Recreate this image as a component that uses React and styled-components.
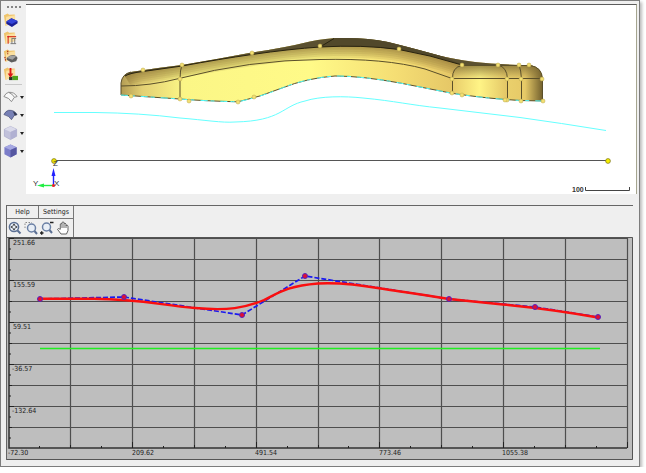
import styled, { createGlobalStyle } from 'styled-components';

const GlobalStyle = createGlobalStyle`
  body {
    margin: 0;
    background: #fff;
    font-family: "DejaVu Sans Condensed", "Open Sans", sans-serif;
    font-size: 7px;
    color: #222;
  }
`;

const Window = styled.main`
  margin-right: 6px;
  padding-top: 3px;
  padding-bottom: 6px;
  border: 1px solid #7d7d7d;
  background: #efefef;
  box-shadow: 2px 2px 3px #bbb;
`;

const TopRow = styled.div`
  display: flex;
  padding-right: 2px;
`;

const SideBar = styled.div`
  width: 25px;
  flex: none;
  display: flex;
  flex-direction: column;
`;

const Grip = styled.div`
  display: flex;
  justify-content: center;
  gap: 2px;
  padding: 2px 0 3px;
`;

const GripDot = styled.span`
  width: 2px;
  height: 2px;
  background: #858585;
`;

const SideButton = styled.button`
  display: flex;
  align-items: center;
  gap: 2px;
  height: 18px;
  padding: 0 0 0 2px;
  border: 0;
  background: none;
`;

const Separator = styled.hr`
  width: 17px;
  height: 1px;
  margin: 1px 4px 3px;
  border: 0;
  background: #c8c8c8;
`;

const Viewport = styled.section`
  flex: 1;
  min-width: 0;
  background: #fff;
  border-top: 1px solid #5c5c5c;
  border-right: 1px solid #a5a590;
`;

const Drawing = styled.svg`
  display: block;
  width: 100%;
  height: auto;
`;

const Editor = styled.section`
  margin: 11px 6px 0 5px;
  border-top: 1px solid #666;
  border-left: 1px solid #666;
`;

const Controls = styled.div`
  width: fit-content;
  border-right: 1px solid #777;
`;

const MenuRow = styled.nav`
  display: flex;
  border-bottom: 1px solid #777;
`;

const MenuButton = styled.button`
  width: ${(props) => props.$width}px;
  height: 12px;
  padding: 0;
  border: 0;
  border-right: ${(props) => (props.$last ? '0' : '1px solid #777')};
  background: none;
  font: inherit;
  line-height: 12px;
  color: #222;
`;

const ToolRow = styled.div`
  display: flex;
  height: 18px;
`;

const ToolButton = styled.button`
  display: flex;
  align-items: center;
  justify-content: center;
  width: 16px;
  padding: 0;
  border: 0;
  background: none;
`;

const Folder = () => (
  <>
    <path d="M1 3 L5 1 L6.5 2.5 L12.5 2 L13 11 L2.5 14 Z" fill="#efc46c" />
    <path d="M3.5 4.5 L13 3 L13 11 L2.5 14 Z" fill="#fbe0a0" />
  </>
);

const icons = {
  openSolid: (
    <>
      <Folder />
      <path d="M3.5 9.5 L9 6 L15.5 9 L15.5 11.5 L9.5 15.5 L3.5 12 Z" fill="#1a1f96" />
      <path d="M3.5 9.5 L9 6 L15.5 9 L9.5 12.2 Z" fill="#3344d8" />
    </>
  ),
  openSketch: (
    <>
      <Folder />
      <path d="M5.5 14 V6.5 H14" fill="none" stroke="#d8412c" strokeWidth="1.3" />
      <path d="M8 14 H14 M9 8.5 H14 M9.5 9 V14 M12.5 9 V14" stroke="#777" fill="none" />
      <circle cx="5.5" cy="6.5" r="1" fill="#d22" />
    </>
  ),
  openPart: (
    <>
      <Folder />
      <path d="M5 2.5 V6 M2 9 L3 14" stroke="#b23c20" strokeWidth="1.4" strokeDasharray="1.5 1" />
      <path d="M4 10 Q9 5 14 8 L15.5 10 L14 13.5 L9 15 L4 12 Z" fill="#5e5e5e" />
      <path d="M4.5 10 Q9 6 14 8.5 L10 12 Z" fill="#a2a2a2" />
    </>
  ),
  importPart: (
    <>
      <Folder />
      <rect x="10" y="10" width="6" height="4.5" fill="#4fa31c" />
      <rect x="6.5" y="11" width="3.5" height="3.5" fill="#263226" />
      <path d="M7 1.5 H9 V7.5 H11 L8 12 L5 7.5 H7 Z" fill="#dc1616" />
    </>
  ),
  surfaceWire: (
    <path d="M1 7.5 Q3 3.5 6 3 Q12 2.5 15 7.5 L12 8.5 L9 13 Q7 9 1 7.5 Z M12 8 Q10 4.5 6 3" fill="#f8f8f8" stroke="#888" />
  ),
  surfaceShaded: (
    <>
      <path d="M1 7.5 Q3 3.5 6 3 Q12 2.5 15 7.5 L12 8.5 L9 13 Q7 9 1 7.5 Z" fill="#7780b5" stroke="#4a5078" strokeWidth=".8" />
      <path d="M10.5 4 Q14 5 15 8 L12.5 8.5 Z" fill="#333850" />
    </>
  ),
  cubeLight: (
    <>
      <path d="M8 1 L14.5 4 V11.5 L8 15 L1.5 11.5 V4 Z" fill="#c1c1da" stroke="#a5a5c6" strokeWidth=".7" />
      <path d="M8 1 L14.5 4 L8 7 L1.5 4 Z" fill="#dadaea" />
      <path d="M8 7 L14.5 4 V11.5 L8 15 Z" fill="#b1b1d2" />
    </>
  ),
  cubeSolid: (
    <>
      <path d="M8 1 L14.5 4 V11.5 L8 15 L1.5 11.5 V4 Z" fill="#7b7dc9" />
      <path d="M8 1 L14.5 4 L8 7 L1.5 4 Z" fill="#a6a8e2" />
      <path d="M8 7 L14.5 4 V11.5 L8 15 Z" fill="#5556a0" />
    </>
  ),
};

const Icon = ({ name }) => (
  <svg width="15" height="16" viewBox="0 0 16 16" aria-hidden="true">{icons[name]}</svg>
);

const Arrow = () => (
  <svg width="4" height="3" viewBox="0 0 4 3" aria-hidden="true">
    <path d="M0 0 H4 L2 3 Z" fill="#222" />
  </svg>
);

const fileTools = [
  ['openSolid', 'Open solid'],
  ['openSketch', 'Open sketch'],
  ['openPart', 'Open part'],
  ['importPart', 'Import part'],
];

const displayTools = [
  ['surfaceWire', 'Surface wireframe'],
  ['surfaceShaded', 'Surface shaded'],
  ['cubeLight', 'Transparent'],
  ['cubeSolid', 'Solid'],
];

const silhouette =
  'M121 95 V83 Q122 74 131 72 Q156 68 182 65 Q218 59 252 52.5 Q284 48 310 41.5 Q326 38 340 38 Q367 37.5 388 42 Q412 48 430 53 Q450 59 475 62 Q498 64.5 530 65 Q542 67 542.5 79 V101 L521 100.5 Q490 99 452 93.3 L400 83 Q362 76 335 76 Q307 78 282 88 Q260 97 238 101.8 Q205 101 180 99 Z';
const topEdge =
  'M125 76 Q130 73 143 71.5 L182 66 Q220 59 252 54.5 Q290 49 320 47 Q362 44.5 399 49.5 Q430 55 462 65';
const lowerEdge =
  'M121 95 Q150 97 180 99 Q205 101 238 101.8 Q260 97 282 88 Q307 78 335 76 Q362 76 400 83 L452 93.3 Q490 99 521 100.5 L542 101';
const knots = [
  [143, 70], [182, 65], [252, 53], [320, 46], [399, 49], [462, 65], [498, 65], [519, 65], [529, 65],
  [542, 79], [543, 101], [521, 101], [507, 100], [505, 100], [462, 95], [452, 93], [452, 79],
  [238, 102], [254, 97], [189, 101], [180, 99], [180, 79], [131, 96], [507, 79], [521, 79],
];

const Model = () => (
  <Drawing viewBox="26 5 610 189" role="img" aria-label="Part model">
    <defs>
      <clipPath id="body"><path d={silhouette} /></clipPath>
      <linearGradient id="skin" x1="121" x2="543" y1="0" y2="0" gradientUnits="userSpaceOnUse">
        <stop offset="0" stopColor="#b39c54" />
        <stop offset=".05" stopColor="#e3d074" />
        <stop offset=".15" stopColor="#fbf686" />
        <stop offset=".45" stopColor="#fffa88" />
        <stop offset=".65" stopColor="#f5de74" />
        <stop offset=".78" stopColor="#e6c867" />
      </linearGradient>
      <linearGradient id="block" x1="452" x2="507" y1="0" y2="0" gradientUnits="userSpaceOnUse">
        <stop offset="0" stopColor="#e8cc6a" />
        <stop offset=".5" stopColor="#fff486" />
        <stop offset="1" stopColor="#e3c666" />
      </linearGradient>
      <linearGradient id="end" x1="507" x2="543" y1="0" y2="0" gradientUnits="userSpaceOnUse">
        <stop offset="0" stopColor="#ead06c" />
        <stop offset=".5" stopColor="#e6c967" />
        <stop offset="1" stopColor="#6f5d2c" />
      </linearGradient>
      <linearGradient id="fade" x1="0" x2="0" y1="64" y2="79" gradientUnits="userSpaceOnUse">
        <stop offset="0" stopColor="#786530" stopOpacity=".8" />
        <stop offset="1" stopColor="#786530" stopOpacity="0" />
      </linearGradient>
    </defs>

    <g clipPath="url(#body)">
      <rect x="120" y="36" width="424" height="68" fill="url(#skin)" />
      <g fill="none" stroke="#8d7838" strokeOpacity=".16">
        <path d={topEdge} strokeWidth="23" />
        <path d={topEdge} strokeWidth="19" />
        <path d={topEdge} strokeWidth="15" />
        <path d={topEdge} strokeWidth="11" />
        <path d={topEdge} strokeWidth="7" />
        <path d={topEdge} strokeWidth="4" />
      </g>
      <path d={`${topEdge} L542 66 V36 H120 Z`} fill="#5b5130" />
      <path d="M320 47 L336 37 H400 L462 65 Q430 55 399 49.5 Q362 44.5 320 47" fill="#51482a" />
      <path d="M452 104 V79 Q452 67 462 66 H498 Q507 68 507 79 V104 Z" fill="url(#block)" />
      <path d="M498 66 Q507 68 507 79 V104 H544 V66 Z" fill="url(#end)" />
      <path d="M452 79 Q452 67 462 65 H544 V79 Z" fill="url(#fade)" />
    </g>

    <g fill="none" stroke="#5a4f2a">
      <path d={topEdge} stroke="#29230f" />
      <path d="M121 95 V83 Q122 74 131 72" />
      <path d="M121 86 Q150 86 179 78.5 Q250 60 320 59.5 Q385 58 425 69 L452 78.5 H542" />
      <path d="M182 65 Q180 70 180 79 V99" />
      <path d="M462 65.5 Q452 67 452.5 79 V93" />
      <path d="M498 65 Q507 67 507.5 79 V100" />
      <path d="M519 65 Q521 70 521.5 79 V100" />
      <path d="M462 65.5 H530 Q542 67 542.5 79 V101" />
      <path d="M320 47 L334 38.5" stroke="#29230f" />
      <path d={lowerEdge} />
      <path d={lowerEdge} stroke="#5ff" strokeDasharray="7 3 4 6" />
      <path d="M54 112.5 H95 Q140 113 180 118 C205 120 222 123 235 122 C282 121 282 106 305 101 C320 96 345 96 363 98 C395 101 410 105 440 108 L520 117.5 Q560 123 606 130.5" stroke="#6ff" />
      <path d="M54 160.5 H606" stroke="#555" />
    </g>
    {knots.map(([x, y], i) => (
      <circle key={i} cx={x} cy={y} r="2" fill="#f2df72" stroke="#bba74d" strokeWidth=".5" />
    ))}
    <circle cx="54" cy="161" r="2.4" fill="#f0e800" stroke="#77701a" strokeWidth=".7" />
    <circle cx="608" cy="161" r="2.4" fill="#f6f000" stroke="#77701a" strokeWidth=".7" />

    <path d="M53.5 185 V173" stroke="#22f" strokeWidth="1.4" />
    <path d="M51.5 176 L53.5 168 L55.5 176 Z" fill="#22f" />
    <path d="M53 185.5 H42" stroke="#2e4" strokeWidth="1.4" />
    <path d="M44 183.5 L37 185.5 L44 187.5 Z" fill="#2e4" />
    <circle cx="53.5" cy="185.5" r="1.6" fill="#e22" />
    <g fontSize="8" fontFamily="Liberation Sans, sans-serif" fill="#333">
      <text x="53" y="166">Z</text>
      <text x="33" y="186">Y</text>
      <text x="54" y="186">X</text>
    </g>
    <text x="572" y="192" fontSize="7" fontWeight="bold" fontFamily="Liberation Sans, sans-serif" fill="#333">100</text>
    <path d="M585.5 187 V190.5 H629.5 V187" fill="none" stroke="#444" />
  </Drawing>
);

const columns = [70, 132, 194, 256, 318, 379, 441, 503, 565, 627];
const rows = [238, 259, 280, 301, 322, 343, 364, 385, 406, 427];
const yLabels = [[245, '251.66'], [287, '155.59'], [329, '59.51'], [371, '-36.57'], [413, '-132.64']];
const xLabels = [[8, '-72.30'], [132, '209.62'], [255, '491.54'], [379, '773.46'], [502, '1055.38']];
const controlPoints = [[40, 299], [124, 297], [242, 315], [305, 276], [449, 299], [535, 307], [598, 317]];

const Plot = () => (
  <Drawing viewBox="7 237 626 223" role="img" aria-label="Profile curve">
    <rect x="7" y="237" width="626" height="223" fill="#bebebe" />
    <path d="M7 237.5 H632.5 V459.5 H7" fill="none" stroke="#555" />
    <g stroke="#4e4e4e" strokeWidth="1.2">
      {columns.map((x) => <path key={x} d={`M${x + 0.5} 238 V448`} />)}
      {rows.map((y) => <path key={y} d={`M9 ${y + 0.5} H627`} />)}
    </g>
    <path d="M9 238 V448 H627" fill="none" stroke="#333" strokeWidth="1.5" />
    <g stroke="#222">
      {rows.map((y, i) => (
        <path key={y} d={`M9 ${y + 0.5} h${i % 2 ? 3 : 5} M9 ${y + 11} h2`} />
      ))}
      {columns.map((x, i) => (
        <path key={x} d={`M${x + 0.5} 448 v${i % 2 ? -6 : -3} M${x - 30.5} 448 v-2`} />
      ))}
    </g>
    <g fontSize="7" fill="#222">
      {yLabels.map(([y, label]) => <text key={label} x={label[0] === '-' ? 12 : 13} y={y}>{label}</text>)}
      {xLabels.map(([x, label]) => <text key={label} x={x} y="455">{label}</text>)}
    </g>
    <path d="M40 348.5 H600" stroke="#1fee1f" strokeWidth="1.5" />
    <polyline points={controlPoints.join(' ')} fill="none" stroke="#1a1af0" strokeWidth="1.7" strokeDasharray="5 2" />
    <path
      d="M40 298.7 H94 C140 299 160 305 195 308 C228 311 245 308 264 300 C280 292 288 286 318 283.5 C350 282 375 288 404 292 Q425 295 449 299 L503 304.5 Q550 309 598 317.5"
      fill="none"
      stroke="#fa0f0f"
      strokeWidth="2.4"
    />
    {controlPoints.map(([x, y]) => (
      <circle key={x} cx={x} cy={y} r="2.5" fill="#e01030" stroke="#5522c0" />
    ))}
  </Drawing>
);

const ZoomAll = () => (
  <svg width="14" height="14" viewBox="0 0 14 14" fill="none" aria-hidden="true">
    <circle cx="6" cy="6" r="4.6" fill="#e8eef6" stroke="#5b6f93" strokeWidth="1.5" />
    <path d="M6 2.5 L7.5 4.5 H4.5 Z M6 9.5 L7.5 7.5 H4.5 Z M2.5 6 L4.5 4.5 V7.5 Z M9.5 6 L7.5 4.5 V7.5 Z" fill="#222" />
    <path d="M9.5 9.5 L12.5 12.5" stroke="#5b6f93" strokeWidth="2" />
  </svg>
);

const ZoomArea = () => (
  <svg width="14" height="14" viewBox="0 0 14 14" fill="none" aria-hidden="true">
    <path d="M1 7 V1.5 H8" stroke="#888" strokeDasharray="1.5 1.5" />
    <circle cx="7.5" cy="7" r="4" fill="#e8eef6" stroke="#6b80a5" strokeWidth="1.5" />
    <path d="M10.5 10 L13 13" stroke="#5b6f93" strokeWidth="2" />
  </svg>
);

const ZoomScale = () => (
  <svg width="14" height="14" viewBox="0 0 14 14" fill="none" aria-hidden="true">
    <circle cx="6.5" cy="6" r="4" fill="#e8eef6" stroke="#6b80a5" strokeWidth="1.5" />
    <path d="M9.5 9 L12 12" stroke="#5b6f93" strokeWidth="2" />
    <path d="M10 1.5 H13.5 M0 12 H3.5 M1.7 10.3 V13.7" stroke="#222" strokeWidth="1.4" />
  </svg>
);

const Hand = () => (
  <svg width="14" height="14" viewBox="0 0 14 14" aria-hidden="true">
    <path
      d="M5 13 L1.5 8.3 Q2 6.8 4.3 8.3 V3 Q5 1.7 6 3 V1.5 Q7 .3 8 1.5 V2.5 Q9 1.5 10 3 V4.5 Q11.5 3.5 12 5 V9.5 L10.5 13 Z M6 3 V7 M8 2.5 V7 M10 4 V7"
      fill="#fff"
      stroke="#555"
      strokeWidth=".9"
    />
  </svg>
);

const App = () => {
  return (
    <Window>
      <GlobalStyle />
      <TopRow>
        <SideBar role="toolbar" aria-label="Model tools">
          <Grip><GripDot /><GripDot /><GripDot /><GripDot /></Grip>
          {fileTools.map(([name, label]) => (
            <SideButton key={name} aria-label={label}><Icon name={name} /></SideButton>
          ))}
          <Separator />
          {displayTools.map(([name, label]) => (
            <SideButton key={name} aria-label={label}><Icon name={name} /><Arrow /></SideButton>
          ))}
        </SideBar>
        <Viewport>
          <Model />
        </Viewport>
      </TopRow>
      <Editor>
        <Controls>
          <MenuRow>
            <MenuButton $width={32}>Help</MenuButton>
            <MenuButton $width={34} $last>Settings</MenuButton>
          </MenuRow>
          <ToolRow>
            <ToolButton aria-label="Zoom all"><ZoomAll /></ToolButton>
            <ToolButton aria-label="Zoom area"><ZoomArea /></ToolButton>
            <ToolButton aria-label="Zoom in and out"><ZoomScale /></ToolButton>
            <ToolButton aria-label="Pan"><Hand /></ToolButton>
          </ToolRow>
        </Controls>
        <Plot />
      </Editor>
    </Window>
  );
};

export default App;
